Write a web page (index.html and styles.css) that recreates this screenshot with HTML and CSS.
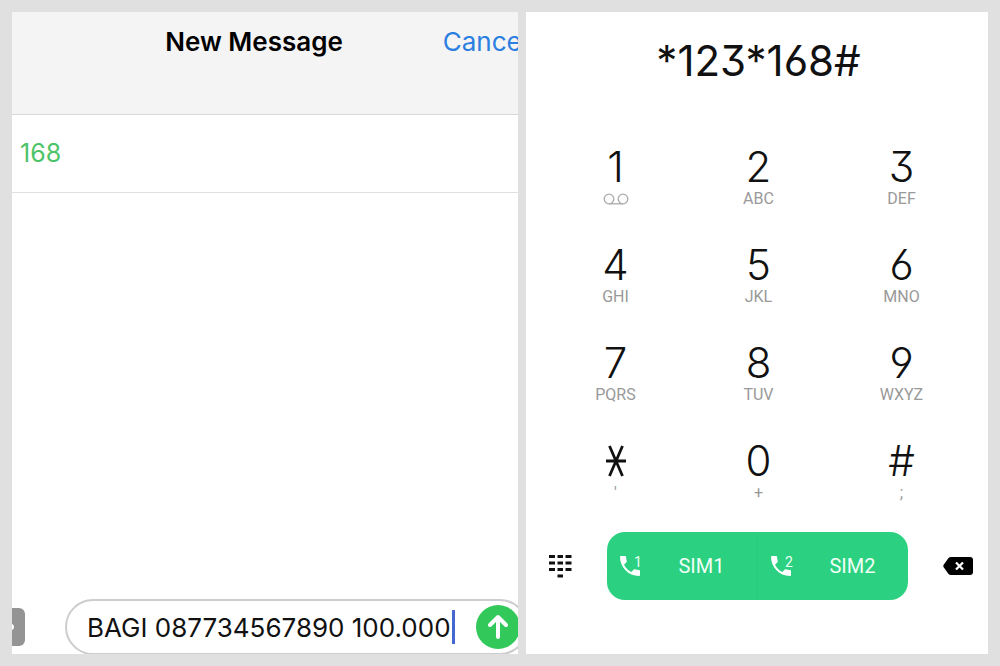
FILE: index.html
```html
<!DOCTYPE html>
<html lang="id">
<head>
    <meta charset="UTF-8">
    <meta name="viewport" content="width=device-width, initial-scale=1">
    <title>New Message</title>
    <link rel="stylesheet" href="styles.css">
</head>
<body>
    <section class="panel messages">
        <div class="phone">
            <header class="header">
                <h1 class="title">New Message</h1>
                <button type="button" class="cancel">Cancel</button>
            </header>
            <div class="recipient">168</div>
            <div class="thread"></div>
            <form class="composer">
                <button type="button" class="camera" aria-label="Camera">
                    <svg width="45" height="38" viewBox="0 0 45 38"><circle cx="31" cy="19" r="3" fill="#fff"/></svg>
                </button>
                <div class="field">
                    <input type="text" class="message" aria-label="Message" value="BAGI 087734567890 100.000">
                    <span class="caret"></span>
                    <button type="button" class="send" aria-label="Send">
                        <svg width="44" height="44" viewBox="0 0 44 44" fill="none" stroke="#fff" stroke-width="4" stroke-linecap="round" stroke-linejoin="round"><path d="M22 32V13M14 20L22 12L30 20"/></svg>
                    </button>
                </div>
            </form>
        </div>
    </section>

    <section class="panel dialer">
        <div class="number">*123*168#</div>
        <div class="keys">
            <button type="button" class="key" aria-label="1, voicemail">
                <span class="digit">1</span>
                <span class="sub"><svg width="26" height="12" viewBox="0 0 26 12" fill="none" stroke="#aaa" stroke-width="1.3"><circle cx="6" cy="6" r="4.800"/><circle cx="20" cy="6" r="4.800"/><path d="M6 10.800H20"/></svg></span>
            </button>
            <button type="button" class="key"><span class="digit">2</span><span class="sub">ABC</span></button>
            <button type="button" class="key"><span class="digit">3</span><span class="sub">DEF</span></button>
            <button type="button" class="key"><span class="digit">4</span><span class="sub">GHI</span></button>
            <button type="button" class="key"><span class="digit">5</span><span class="sub">JKL</span></button>
            <button type="button" class="key"><span class="digit">6</span><span class="sub">MNO</span></button>
            <button type="button" class="key"><span class="digit">7</span><span class="sub">PQRS</span></button>
            <button type="button" class="key"><span class="digit">8</span><span class="sub">TUV</span></button>
            <button type="button" class="key"><span class="digit">9</span><span class="sub">WXYZ</span></button>
            <button type="button" class="key" aria-label="Star">
                <span class="digit"><svg width="20" height="32" viewBox="0 0 20 32" stroke="#111" stroke-width="2.8"><path d="M3.500 1L16.500 31M16.500 1L3.500 31M0 16H20"/></svg></span>
                <span class="sub">'</span>
            </button>
            <button type="button" class="key"><span class="digit">0</span><span class="sub">+</span></button>
            <button type="button" class="key"><span class="digit">#</span><span class="sub">;</span></button>
        </div>
        <div class="actions">
            <button type="button" class="tool" aria-label="Hide keypad">
                <svg width="24" height="24" viewBox="0 0 24 24" fill="none" stroke="#111" stroke-width="3"><path d="M1 2.500H7M9.500 2.500H15M17.500 2.500H23.500M1 9H7M9.500 9H15M17.500 9H23.500M1 15.500H7M9.500 15.500H15M17.500 15.500H23.500M9.500 22H15"/></svg>
            </button>
            <div class="calls">
                <button type="button" class="call">
                    <svg width="20" height="20" viewBox="3 3 18 18" fill="#fff"><path d="M6.620 10.790c1.440 2.830 3.760 5.140 6.590 6.590l2.200-2.200c.270-.270.670-.360 1.020-.240 1.120.370 2.330.570 3.570.570.550 0 1 .450 1 1V20c0 .550-.450 1-1 1-9.390 0-17-7.610-17-17 0-.550.450-1 1-1h3.500c.550 0 1 .450 1 1 0 1.250.200 2.450.570 3.570.110.350.030.740-.250 1.020z"/></svg>
                    <sup class="slot">1</sup>
                    <span class="sim">SIM1</span>
                </button>
                <button type="button" class="call">
                    <svg width="20" height="20" viewBox="3 3 18 18" fill="#fff"><path d="M6.620 10.790c1.440 2.830 3.760 5.140 6.590 6.590l2.200-2.200c.270-.270.670-.360 1.020-.240 1.120.370 2.330.570 3.570.570.550 0 1 .450 1 1V20c0 .550-.450 1-1 1-9.390 0-17-7.610-17-17 0-.550.450-1 1-1h3.500c.550 0 1 .450 1 1 0 1.250.200 2.450.570 3.570.110.350.030.740-.250 1.020z"/></svg>
                    <sup class="slot">2</sup>
                    <span class="sim">SIM2</span>
                </button>
            </div>
            <button type="button" class="tool" aria-label="Delete">
                <svg width="30" height="18" viewBox="0 0 30 18"><path d="M8 0H27Q30 0 30 3V15Q30 18 27 18H8Q6.500 18 5.500 17L.500 10Q0 9 .500 8L5.500 1Q6.500 0 8 0Z" fill="#000"/><path d="M13 5.500L20 12.500M20 5.500L13 12.500" stroke="#fff" stroke-width="2.300"/></svg>
            </button>
        </div>
    </section>
</body>
</html>
```
FILE: styles.css
```css
* {
    box-sizing: border-box;
}
body {
    display: grid;
    grid-template-columns: 506fr 462fr;
    gap: 8px;
    min-height: 100vh;
    margin: 0;
    padding: 12px;
    background-color: #e0e0e0;
    font-family: Inter, "Liberation Sans", sans-serif;
}
button {
    padding: 0;
    border: none;
    background: none;
    color: inherit;
    font: inherit;
    cursor: pointer;
}
svg {
    display: block;
}
.panel {
    min-width: 0;
    overflow: hidden;
    background-color: #fff;
}

/* Messages: the phone is wider than its panel on both sides */
.phone {
    display: flex;
    flex-direction: column;
    height: 100%;
    margin: 0 -10px 0 -32px;
}
.header {
    display: grid;
    grid-template-columns: 1fr auto 1fr;
    align-items: start;
    height: 103px;
    padding-top: 14px;
    border-bottom: 1px solid #d8d8d8;
    background-color: #f4f4f4;
}
.title {
    grid-column: 2;
    margin: 0;
    font-size: 26px;
    line-height: 32px;
    font-weight: 600;
}
.cancel {
    justify-self: end;
    color: #2a7fe0;
    font-size: 26px;
    line-height: 32px;
}
.recipient {
    height: 78px;
    padding: 22px 40px;
    border-bottom: 1px solid #e0e0e0;
    color: #4cc368;
    font-size: 25px;
    line-height: 32px;
}
.thread {
    flex: 1;
}
.composer {
    display: flex;
    align-items: center;
    gap: 40px;
    margin-bottom: -1px;
}
.camera {
    flex: none;
    border-radius: 6px;
    background-color: #949494;
    overflow: hidden;
}
.field {
    display: flex;
    flex: 1;
    align-items: center;
    min-width: 0;
    height: 56px;
    padding: 0 6px 0 20px;
    border: 2px solid #cdcdd0;
    border-radius: 28px;
}
.message {
    width: 365px;
    padding: 0;
    border: none;
    outline: none;
    background: none;
    color: #111;
    font: inherit;
    font-size: 26px;
}
.caret {
    width: 3px;
    height: 34px;
    background-color: #4468d0;
}
.send {
    flex: none;
    margin-left: auto;
    border-radius: 50%;
    background-color: #32c95a;
}

/* Dialer */
.dialer {
    display: flex;
    flex-direction: column;
    padding: 28px 15px 54px 18px;
    color: #111;
}
.number,
.digit {
    font-size: 42px;
    line-height: 42px;
    font-feature-settings: "cv03", "cv04", "cv09", "calt" 0;
}
.number {
    text-align: center;
}
.keys {
    display: grid;
    grid-template-columns: repeat(3, 1fr);
    row-gap: 34px;
    margin-top: 64px;
}
.key {
    display: flex;
    flex-direction: column;
    align-items: center;
}
.digit {
    display: flex;
    align-items: center;
    height: 42px;
    font-weight: 300;
}
.sub {
    display: flex;
    align-items: center;
    height: 22px;
    color: #999;
    font-family: Roboto, sans-serif;
    font-size: 16px;
    line-height: 20px;
}
.actions {
    display: flex;
    align-items: center;
    justify-content: space-between;
    margin-top: auto;
    padding-left: 4px;
}
.calls {
    display: flex;
    width: 301px;
    height: 68px;
    border-radius: 18px;
    background-color: #2bd181;
    color: #effff6;
    font-family: Roboto, sans-serif;
}
.call {
    display: flex;
    flex: 1;
    align-items: center;
    padding-left: 13px;
}
.call + .call {
    border-left: 1px solid #29cb7c;
}
.slot {
    align-self: flex-start;
    margin: 22px 0 0 -6px;
    font-size: 14px;
    line-height: 16px;
}
.sim {
    flex: 1;
    padding-left: 4px;
    font-size: 20px;
    text-align: center;
}
```
